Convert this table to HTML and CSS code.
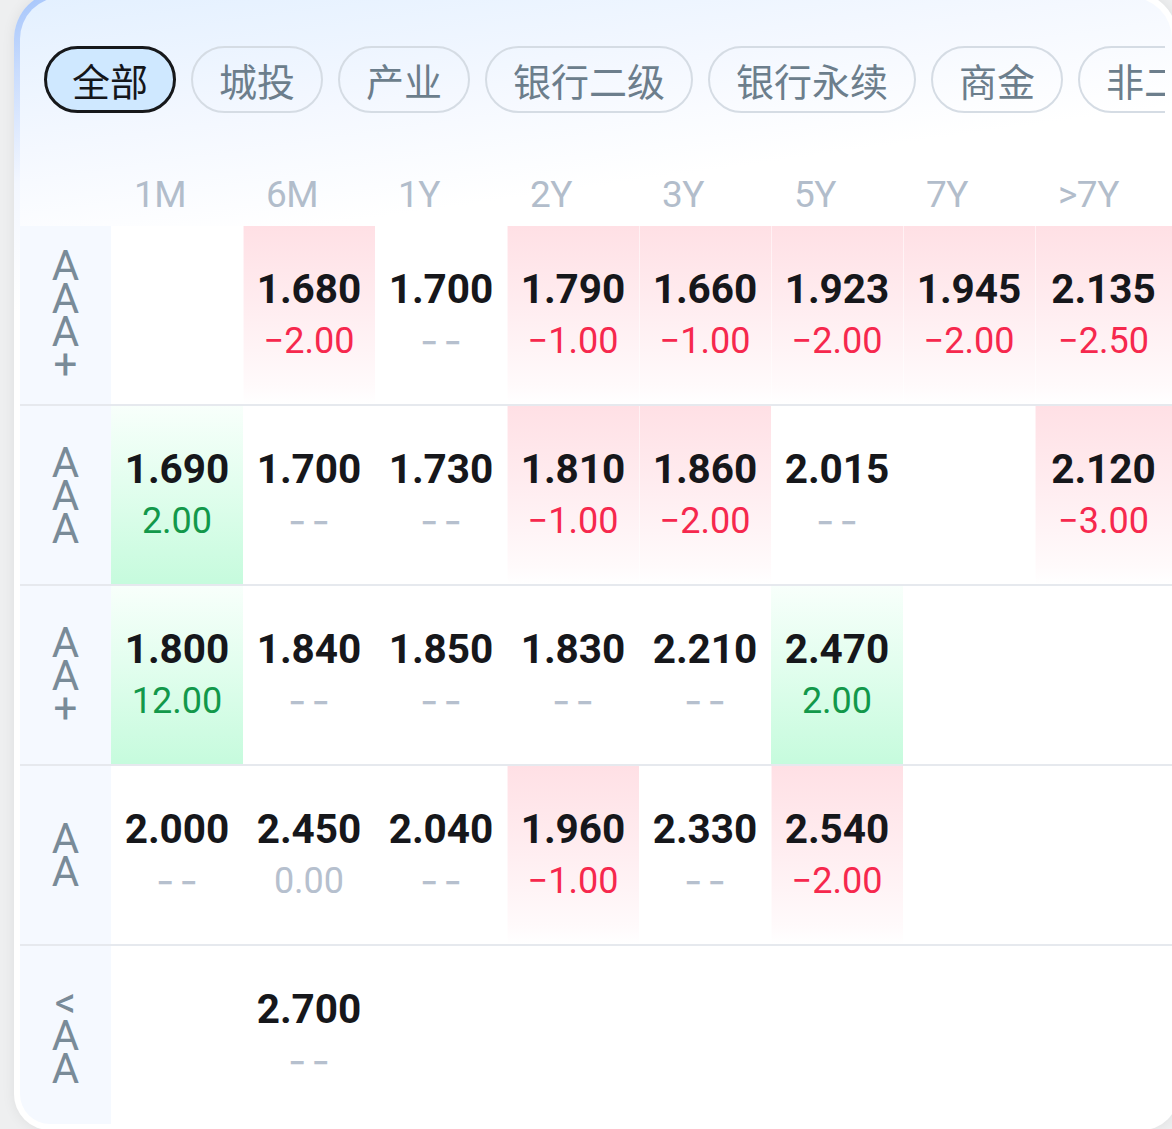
FILE: index.html
```html
<!DOCTYPE html>
<html lang="zh-CN">
<head>
<meta charset="utf-8">
<title>收益率矩阵</title>
<link rel="stylesheet" href="styles.css">
</head>
<body>
<div class="card">
  <div class="card-inner">
    <div class="chips">
      <span class="chip active">全部</span>
      <span class="chip">城投</span>
      <span class="chip">产业</span>
      <span class="chip">银行二级</span>
      <span class="chip">银行永续</span>
      <span class="chip">商金</span>
      <span class="chip">非二永</span>
    </div>
    <div class="matrix">
      <div class="row head">
        <div class="corner"></div>
        <div class="h">1M</div><div class="h">6M</div><div class="h">1Y</div><div class="h">2Y</div>
        <div class="h">3Y</div><div class="h">5Y</div><div class="h">7Y</div><div class="h">&gt;7Y</div>
      </div>

      <div class="row">
        <div class="label"><span>AAA+</span></div>
        <div class="cell"></div>
        <div class="cell up"><div class="v">1.680</div><div class="c neg">−2.00</div></div>
        <div class="cell"><div class="v">1.700</div><div class="c dash">--</div></div>
        <div class="cell up"><div class="v">1.790</div><div class="c neg">−1.00</div></div>
        <div class="cell up"><div class="v">1.660</div><div class="c neg">−1.00</div></div>
        <div class="cell up"><div class="v">1.923</div><div class="c neg">−2.00</div></div>
        <div class="cell up"><div class="v">1.945</div><div class="c neg">−2.00</div></div>
        <div class="cell up"><div class="v">2.135</div><div class="c neg">−2.50</div></div>
      </div>

      <div class="row sep">
        <div class="label"><span>AAA</span></div>
        <div class="cell down"><div class="v">1.690</div><div class="c pos">2.00</div></div>
        <div class="cell"><div class="v">1.700</div><div class="c dash">--</div></div>
        <div class="cell"><div class="v">1.730</div><div class="c dash">--</div></div>
        <div class="cell up"><div class="v">1.810</div><div class="c neg">−1.00</div></div>
        <div class="cell up"><div class="v">1.860</div><div class="c neg">−2.00</div></div>
        <div class="cell"><div class="v">2.015</div><div class="c dash">--</div></div>
        <div class="cell"></div>
        <div class="cell up"><div class="v">2.120</div><div class="c neg">−3.00</div></div>
      </div>

      <div class="row sep">
        <div class="label"><span>AA+</span></div>
        <div class="cell down"><div class="v">1.800</div><div class="c pos">12.00</div></div>
        <div class="cell"><div class="v">1.840</div><div class="c dash">--</div></div>
        <div class="cell"><div class="v">1.850</div><div class="c dash">--</div></div>
        <div class="cell"><div class="v">1.830</div><div class="c dash">--</div></div>
        <div class="cell"><div class="v">2.210</div><div class="c dash">--</div></div>
        <div class="cell down"><div class="v">2.470</div><div class="c pos">2.00</div></div>
        <div class="cell"></div>
        <div class="cell"></div>
      </div>

      <div class="row sep">
        <div class="label"><span>AA</span></div>
        <div class="cell"><div class="v">2.000</div><div class="c dash">--</div></div>
        <div class="cell"><div class="v">2.450</div><div class="c zero">0.00</div></div>
        <div class="cell"><div class="v">2.040</div><div class="c dash">--</div></div>
        <div class="cell up"><div class="v">1.960</div><div class="c neg">−1.00</div></div>
        <div class="cell"><div class="v">2.330</div><div class="c dash">--</div></div>
        <div class="cell up"><div class="v">2.540</div><div class="c neg">−2.00</div></div>
        <div class="cell"></div>
        <div class="cell"></div>
      </div>

      <div class="row sep">
        <div class="label"><span>&lt;AA</span></div>
        <div class="cell"></div>
        <div class="cell"><div class="v">2.700</div><div class="c dash">--</div></div>
        <div class="cell"></div>
        <div class="cell"></div>
        <div class="cell"></div>
        <div class="cell"></div>
        <div class="cell"></div>
        <div class="cell"></div>
      </div>
    </div>
  </div>
</div>
</body>
</html>
```

FILE: styles.css
```css
html, body {
  margin: 0;
  padding: 0;
  overflow: hidden;
}

body {
  background: #eeeff0;
  font-family: "Roboto", "Noto Sans CJK SC", sans-serif;
  height: 1129px;
}

.card {
  box-sizing: border-box;
  width: 1164px;
  margin: -9px 0 0 14px;
  padding: 6px;
  border-radius: 48px 48px 36px 36px;
  background: linear-gradient(158deg, #a2c3fb 0%, #c9dcfd 5%, #f3f7ff 12%, #ffffff 20%);
  box-shadow: 0 0 14px rgba(0, 0, 0, 0.07);
}

.card-inner {
  border-radius: 42px 42px 30px 30px;
  overflow: hidden;
  background: linear-gradient(172deg, #e3f0ff 0%, #f4f8ff 12%, #ffffff 21%);
}

/* chips */
.chips {
  display: flex;
  gap: 15px;
  margin: 49px 7px 0 0;
  padding-left: 24px;
  overflow: hidden;
  white-space: nowrap;
}

.chip {
  flex-shrink: 0;
  box-sizing: border-box;
  height: 67px;
  padding: 0 26px;
  border: 2px solid #d5dce4;
  border-radius: 34px;
  font-family: "Noto Sans CJK SC", sans-serif;
  font-size: 38px;
  line-height: 63px;
  color: #6c7e8c;
}

.chip.active {
  border: 3px solid #16181b;
  padding: 0 25px;
  line-height: 61px;
  background: #cfe8ff;
  color: #14161a;
}

/* matrix */
.row {
  display: grid;
  grid-template-columns: 91px repeat(7, 132px) 1fr;
  height: 178px;
}

.row.sep {
  border-top: 2px solid #e6e9ee;
}

.row.head {
  height: 113px;
  align-items: end;
}

.h {
  padding: 0 0 13px 23px;
  font-size: 37px;
  font-weight: 400;
  line-height: 37px;
  letter-spacing: -0.5px;
  color: #b2bdcb;
}

.label {
  display: flex;
  align-items: center;
  justify-content: center;
  background: #f5f9ff;
}

.label span {
  width: 32px;
  word-break: break-all;
  text-align: center;
  font-size: 42px;
  line-height: 33px;
  color: #798b98;
}

.cell {
  display: flex;
  flex-direction: column;
  align-items: center;
  justify-content: center;
  background: #ffffff;
}

.cell.up {
  background: linear-gradient(180deg, #ffe0e5 0%, #ffeef1 50%, #fffafb 90%, #ffffff 100%);
  box-shadow: inset 1px 0 0 rgba(255, 255, 255, 0.55);
}

.cell.down {
  background: linear-gradient(180deg, #f8fffb 0%, #e2feee 45%, #c6fbdd 100%);
}

.v {
  font-size: 40.5px;
  font-weight: 700;
  line-height: 52px;
  color: #16171b;
}

.c {
  font-size: 36px;
  font-weight: 400;
  line-height: 52px;
}

.neg { color: #f6284d; }
.pos { color: #12984a; }
.zero { color: #b6c0ce; }

.dash {
  font-family: "Inter", sans-serif;
  font-size: 40px;
  letter-spacing: 5px;
  padding-left: 5px;
  color: #b6c0ce;
}
```
